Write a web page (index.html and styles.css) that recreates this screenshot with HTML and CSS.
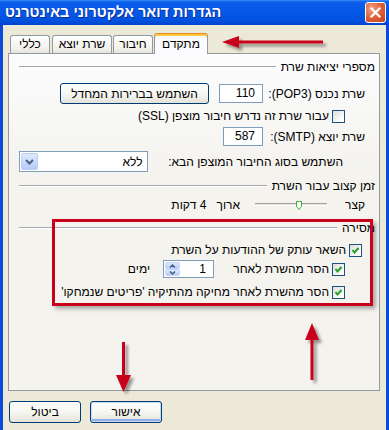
FILE: index.html
```html
<!DOCTYPE html>
<html lang="he">
<head>
  <meta charset="UTF-8" />
  <title>הגדרות דואר אלקטרוני באינטרנט</title>
  <link rel="stylesheet" href="styles.css">
</head>
<body>
  <div class="window">
    <div class="titlebar">
      <span class="title">הגדרות דואר אלקטרוני באינטרנט</span>
      <span class="close"><svg width="13" height="13" viewBox="0 0 13 13"><path d="M2.5 2.5 L10.5 10.5 M10.5 2.5 L2.5 10.5" stroke="#fff" stroke-width="2.2" stroke-linecap="square"/></svg></span>
    </div>
    <div class="frame">
      <div class="tabs">
        <div class="tab tab-general">כללי</div>
        <div class="tab tab-out">שרת יוצא</div>
        <div class="tab tab-conn">חיבור</div>
        <div class="tab active">מתקדם</div>
      </div>
      <div class="panel">
        <div class="heading"><span>מספרי יציאות שרת</span><i></i></div>
        <div class="row row-pop">
          <span class="label">שרת נכנס (POP3):</span>
          <span class="field field-pop">110</span>
          <span class="btn btn-defaults">השתמש בברירות המחדל</span>
        </div>
        <div class="row row-ssl">
          <span class="cb"></span>
          <span class="cb-text">עבור שרת זה נדרש חיבור מוצפן (SSL)</span>
        </div>
        <div class="row row-smtp">
          <span class="label">שרת יוצא (SMTP):</span>
          <span class="field field-smtp">587</span>
        </div>
        <div class="row row-enc">
          <span class="label-enc">השתמש בסוג החיבור המוצפן הבא:</span>
          <span class="select"><span>ללא</span><b class="drop"><svg width="9" height="6" viewBox="0 0 9 6"><path d="M1 1 L4.5 4.5 L8 1" stroke="#4D6185" stroke-width="2" fill="none"/></svg></b></span>
        </div>

        <div class="heading heading-time"><span>זמן קצוב עבור השרת</span><i></i></div>
        <div class="row row-time">
          <span class="short">קצר</span>
          <span class="slider"><i class="track"></i><svg class="thumb" width="6" height="9" viewBox="0 0 6 9"><path d="M0.5 0.5 H5.5 V5.5 L3 8.5 L0.5 5.5 Z" fill="#fff" stroke="#3BB33B"/></svg></span>
          <span class="long">ארוך</span>
          <span class="minutes">4 דקות</span>
        </div>

        <div class="heading heading-delivery"><span>מסירה</span><i></i></div>
        <div class="row row-keep">
          <span class="cb checked"><svg width="11" height="11" viewBox="0 0 11 11"><path d="M2.5 5 L4.5 7.5 L8.5 3" stroke="#21A121" stroke-width="2" fill="none"/></svg></span>
          <span class="cb-text">השאר עותק של ההודעות על השרת</span>
        </div>
        <div class="row row-remove">
          <span class="cb checked"><svg width="11" height="11" viewBox="0 0 11 11"><path d="M2.5 5 L4.5 7.5 L8.5 3" stroke="#21A121" stroke-width="2" fill="none"/></svg></span>
          <span class="cb-text remove-after">הסר מהשרת לאחר</span>
          <span class="spin">
            <span class="spin-val">1</span>
            <span class="spin-btns">
              <b><svg width="7" height="4" viewBox="0 0 7 4"><path d="M1 3.5 L3.5 1 L6 3.5" stroke="#4D6185" stroke-width="1.5" fill="none"/></svg></b>
              <b><svg width="7" height="4" viewBox="0 0 7 4"><path d="M1 0.5 L3.5 3 L6 0.5" stroke="#4D6185" stroke-width="1.5" fill="none"/></svg></b>
            </span>
          </span>
          <span class="days">ימים</span>
        </div>
        <div class="row row-deleted">
          <span class="cb checked"><svg width="11" height="11" viewBox="0 0 11 11"><path d="M2.5 5 L4.5 7.5 L8.5 3" stroke="#21A121" stroke-width="2" fill="none"/></svg></span>
          <span class="cb-text">הסר מהשרת לאחר מחיקה מהתיקיה 'פריטים שנמחקו'</span>
        </div>
      </div>
      <div class="buttons">
        <button class="btn">ביטול</button>
        <button class="btn btn-ok">אישור</button>
      </div>
    </div>

    <div class="callout"></div>
    <svg class="marks" width="389" height="430" viewBox="0 0 389 430">
      <defs>
        <filter id="shadow" x="-50%" y="-50%" width="200%" height="200%">
          <feGaussianBlur in="SourceAlpha" stdDeviation="1.6"/>
          <feOffset dx="3" dy="3"/>
          <feComponentTransfer><feFuncA type="linear" slope="0.4"/></feComponentTransfer>
          <feMerge><feMergeNode/><feMergeNode in="SourceGraphic"/></feMerge>
        </filter>
      </defs>
      <g fill="#C8001C" filter="url(#shadow)">
        <path d="M323 40.5 H239 V36 L222 42 L239 48 V43.5 H323 Z"/>
        <path d="M310.5 380 V340 H305 L312 323 L319 340 H313.5 V380 Z"/>
        <path d="M122 342 V375 H116 L123.5 392 L131 375 H125 V342 Z"/>
      </g>
    </svg>
  </div>
</body>
</html>
```

FILE: styles.css
```css
* { box-sizing: border-box; margin: 0; padding: 0; }
body { background: #ECE9D8; color: #000; font-family: "Liberation Sans", "DejaVu Sans", sans-serif; font-size: 12px; overflow: hidden; }
.window { position: relative; width: 389px; height: 430px; background: #ECE9D8; overflow: hidden; }

/* title bar */
.titlebar { height: 25px; display: flex; align-items: center; justify-content: space-between; padding: 0 3px 1px 5px; background: linear-gradient(#3C8CF8 0, #0A5FEB 2px, #0558E6 45%, #0150DE 85%, #0042C9 100%); }
.title { direction: rtl; color: #fff; font-weight: bold; font-size: 14.5px; text-shadow: 1px 1px 0 #0B2C9A; }
.close { width: 21px; height: 21px; border: 1px solid #fff; border-radius: 3px; background: radial-gradient(circle at 30% 30%, #F0A285, #DD5A34 55%, #C6421F); display: flex; align-items: center; justify-content: center; }

.frame { height: 405px; border-left: 3px solid #0A4ADB; border-right: 3px solid #0A4ADB; padding: 8px 6px 0 5px; }

/* tabs */
.tabs { display: flex; align-items: flex-end; height: 20px; position: relative; z-index: 1; }
.tab { height: 18px; border: 1px solid #919B9C; border-bottom: none; border-radius: 3px 3px 0 0; background: linear-gradient(#FFFFFF, #F3F2ED 70%, #E6E4DA); text-align: center; line-height: 16px; direction: rtl; }
.tab-general { width: 40px; margin-left: 2px; }
.tab-out { width: 60px; margin-left: 2px; }
.tab-conn { width: 40px; margin-left: 1px; }
.tab.active { width: 54px; height: 21px; margin-left: 1px; margin-bottom: -1px; background: #FCFCFE; border-top-color: #E68B2C; box-shadow: inset 0 2px 0 #FFC73C; line-height: 20px; }

/* tab page */
.panel { width: 372px; height: 338px; border: 1px solid #919B9C; background: linear-gradient(#FCFCFE, #F4F3EE 35%); direction: rtl; padding: 6px 4px 0 10px; }
.heading { display: flex; align-items: center; height: 14px; }
.heading i { flex: 1; margin-right: 5px; border-top: 1px solid #A7A6AA; border-bottom: 1px solid #fff; }
.heading-time { margin-top: 7px; }
.heading-delivery { margin-top: 9px; }

.row { display: flex; align-items: center; }
.row-pop { height: 21px; margin-top: 9px; margin-right: 10px; }
.row-ssl { height: 16px; margin-top: 4px; margin-right: 30px; }
.row-smtp { height: 19px; margin-top: 3px; margin-right: 10px; }
.row-enc { height: 21px; margin-top: 5px; margin-right: 32px; }
.row-time { height: 14px; margin-top: 5px; margin-right: 10px; }
.row-keep { height: 16px; margin-top: 7px; margin-right: 13px; }
.row-remove { height: 20px; margin-top: 1px; margin-right: 30px; }
.row-deleted { height: 16px; margin-top: 5px; margin-right: 30px; }

.label { width: 102px; }
.label-enc { width: 196px; }
.field { height: 19px; border: 1px solid #7F9DB9; background: #fff; direction: ltr; text-align: right; padding-right: 7px; line-height: 17px; }
.field-pop { width: 44px; }
.field-smtp { width: 40px; }

.btn { height: 21px; border: 1px solid #003C74; border-radius: 3px; background: linear-gradient(#FFFFFF, #F5F5F1 55%, #E4E2D8); display: flex; align-items: center; justify-content: center; font: inherit; color: #000; direction: rtl; }
.btn-defaults { width: 149px; margin-right: 10px; }

.cb { width: 13px; height: 13px; flex: none; border: 1px solid #1C5180; background: linear-gradient(135deg, #DCDCD7, #FFFFFF 80%); display: flex; align-items: center; justify-content: center; }
.cb-text { margin-right: 3px; white-space: nowrap; }
.remove-after { width: 115px; }

.select { width: 129px; height: 21px; border: 1px solid #7F9DB9; background: #fff; display: flex; align-items: center; justify-content: space-between; padding: 1px; }
.select span { padding-right: 3px; }
.drop { width: 17px; height: 17px; border: 1px solid #BCCEF7; border-radius: 2px; background: linear-gradient(#E0EAFD, #B6CAF7); display: flex; align-items: center; justify-content: center; }

.short { width: 38px; }
.slider { width: 72px; height: 14px; position: relative; }
.slider .track { position: absolute; left: 0; right: 0; top: 5px; height: 3px; border-top: 1px solid #A3A29E; border-bottom: 1px solid #fff; background: #E2E1DA; }
.slider .thumb { position: absolute; left: 41px; top: 3px; }
.long { margin-right: 15px; }
.minutes { margin-right: 10px; }

.spin { width: 51px; height: 18px; border: 1px solid #7F9DB9; background: #fff; display: flex; justify-content: space-between; padding: 1px; }
.spin-val { direction: ltr; padding-right: 6px; line-height: 14px; }
.spin-btns { width: 15px; display: flex; flex-direction: column; }
.spin-btns b { flex: 1; border: 1px solid #C3D3FD; border-radius: 2px; background: linear-gradient(#E0EAFD, #B8CCF6); display: flex; align-items: center; justify-content: center; }
.days { margin-right: 13px; }

/* dialog buttons */
.buttons { display: flex; gap: 9px; margin-top: 10px; padding-left: 1px; }
.buttons .btn { width: 72px; height: 22px; }
.btn-ok { box-shadow: inset 0 0 0 1px #C6DAF8, inset 0 -2px 0 1px #8FB0E8; }

/* annotations */
.callout { position: absolute; left: 52px; top: 219px; width: 321px; height: 87px; border: 3px solid #C8001C; box-shadow: 3px 3px 4px rgba(0,0,0,0.3); }
.marks { position: absolute; left: 0; top: 0; pointer-events: none; }
```
